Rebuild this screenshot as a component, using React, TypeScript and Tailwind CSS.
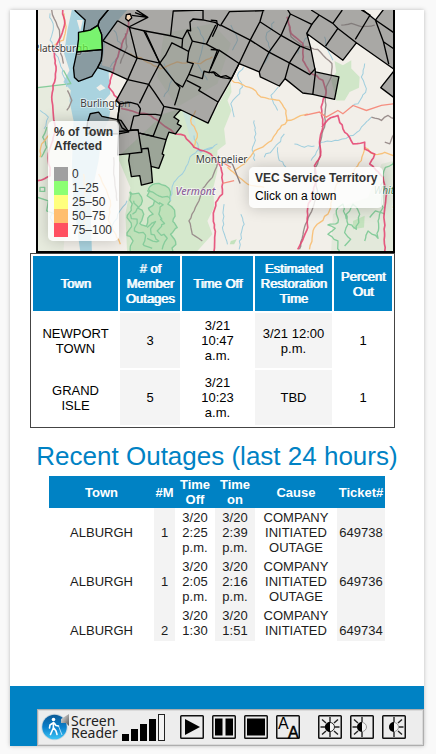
import React from "react";

const LEGEND = [
  { label: "0", swatch: "bg-[#a0a0a0]" },
  { label: "1–25", swatch: "bg-[#8cff72]" },
  { label: "25–50", swatch: "bg-[#ffff7d]" },
  { label: "50–75", swatch: "bg-[#ffbe6e]" },
  { label: "75–100", swatch: "bg-[#ff5060]" },
];

const CURRENT = [
  ["NEWPORT TOWN", "3", "3/21 10:47 a.m.", "3/21 12:00 p.m.", "1"],
  ["GRAND ISLE", "5", "3/21 10:23 a.m.", "TBD", "1"],
];

const RECENT = [
  ["ALBURGH", "1", "3/20 2:25 p.m.", "3/20 2:39 p.m.", "COMPANY INITIATED OUTAGE", "649738"],
  ["ALBURGH", "1", "3/20 2:05 p.m.", "3/20 2:16 p.m.", "COMPANY INITIATED OUTAGE", "649736"],
  ["ALBURGH", "2", "3/20 1:30 p.m.", "3/20 1:51 p.m.", "COMPANY INITIATED OUTAGE", "649734"],
];

// Splits each straight run into short steps with a repeatable sideways drift,
// so rivers, roads and forest edges look natural.
function meander(lines: number[][], amp: number): string {
  let seed = 7;
  const rand = () => {
    seed = (seed * 16807) % 2147483647;
    return seed / 2147483647 - 0.5;
  };
  return lines
    .map((p) => {
      let d = `M${p[0]} ${p[1]}`;
      for (let i = 2; i < p.length; i += 2) {
        const [x0, y0, x1, y1] = [p[i - 2], p[i - 1], p[i], p[i + 1]];
        const steps = Math.max(1, Math.round(Math.hypot(x1 - x0, y1 - y0) / 11));
        for (let s = 1; s <= steps; s++) {
          const t = s / steps;
          const k = s === steps ? 0 : amp;
          d += ` L${(x0 + (x1 - x0) * t + rand() * k).toFixed(1)} ${(y0 + (y1 - y0) * t + rand() * k).toFixed(1)}`;
        }
      }
      return d;
    })
    .join(" ");
}

const FOREST = [
  [298, 573, 325, 577, 336, 600, 322, 622, 340, 640, 328, 668, 348, 676, 352, 652, 368, 640, 354, 622, 372, 600, 350, 585, 358, 558, 385, 548, 405, 555, 420, 580, 412, 610, 432, 628, 428, 655, 440, 680, 420, 700, 435, 722, 428, 755, 300, 755, 308, 720, 290, 704, 303, 672, 290, 650, 302, 620, 298, 573],
];
const FOREST_TRAILS = [
  [300, 640, 320, 655, 312, 690, 345, 702, 338, 730, 365, 742],
  [372, 600, 398, 612, 385, 640, 402, 668, 380, 690, 410, 712, 395, 745],
  [350, 570, 385, 585, 415, 590],
  [350, 680, 375, 662, 362, 700, 385, 720, 350, 712],
  [310, 600, 325, 620, 306, 640],
];
const PRESERVES = [
  [925, 750, 920, 720, 890, 700, 912, 682, 890, 672, 920, 665, 915, 630, 935, 610, 945, 655],
  [940, 735, 958, 715, 940, 695, 950, 670, 945, 640, 965, 610, 985, 640, 975, 685, 950, 670],
  [1000, 720, 1010, 690, 1040, 712, 1040, 660, 1055, 620, 1050, 560, 1062, 500, 1089, 480],
  [1015, 650, 1032, 630, 1060, 640],
  [50, 380, 38, 410, 50, 440, 34, 470],
];
const RIVERS = [
  [60, 40, 70, 80, 60, 120, 90, 190, 110, 260],
  [30, 330, 55, 350, 42, 385],
  [80, 620, 60, 650, 80, 700],
  [290, 600, 262, 640, 240, 700],
  [545, 440, 500, 450, 475, 480, 455, 520, 430, 545, 420, 600],
  [490, 405, 510, 455, 560, 430],
  [638, 200, 620, 225, 635, 260, 600, 310, 610, 350],
  [742, 260, 720, 285, 740, 330],
  [760, 400, 740, 430, 700, 470],
  [670, 360, 675, 400, 665, 440, 672, 480],
  [740, 440, 745, 480, 765, 500],
  [580, 610, 575, 680, 590, 730],
  [630, 640, 640, 670, 630, 700, 625, 745],
  [1000, 190, 990, 230, 1005, 265, 980, 310, 960, 320],
  [790, 430, 820, 440, 850, 436],
  [840, 480, 870, 425, 920, 420, 965, 405, 990, 380, 1020, 350],
  [730, 65, 705, 110, 720, 150, 700, 190],
  [600, 75, 620, 120, 605, 150],
  [800, 160, 830, 110],
  [250, 90, 275, 150, 240, 200],
  [500, 80, 520, 120, 500, 190, 530, 240],
  [400, 190, 425, 240, 400, 290],
  [880, 110, 890, 150, 905, 180],
];
const ROADS = [
  [603, 240, 665, 265, 690, 290, 745, 300, 765, 330, 768, 362, 740, 390, 722, 420, 695, 440, 670, 450, 640, 490, 610, 510],
  [765, 360, 790, 355, 830, 340],
  [24, 150, 60, 140, 100, 120, 108, 80, 102, 40],
  [60, 400, 35, 430, 30, 470],
  [300, 160, 340, 180, 390, 205, 440, 185, 510, 190, 545, 170],
  [1000, 440, 990, 480, 960, 520, 920, 545, 890, 640, 850, 680, 835, 745],
  [1000, 440, 1030, 462, 1060, 455, 1085, 465],
  [590, 500, 650, 550, 700, 560],
  [205, 520, 240, 600, 235, 660, 270, 730],
  [490, 440, 500, 400, 480, 360, 495, 330],
  [160, 520, 165, 700],
];
const RAILS = [
  [65, 30, 72, 55, 88, 90, 88, 140, 100, 190],
  [770, 60, 780, 110, 815, 138, 860, 148, 885, 175, 902, 190, 900, 230, 885, 260, 880, 380, 865, 430, 868, 465, 850, 510, 860, 580, 820, 680, 805, 745],
  [560, 490, 545, 530, 515, 565, 505, 600, 475, 660, 485, 700, 515, 720],
  [1088, 400, 1075, 430, 1060, 425],
  [285, 100, 290, 140, 270, 190],
  [1020, 350, 1050, 360, 1070, 345, 1089, 355],
  [930, 75, 960, 70, 990, 80, 1030, 75],
  [112, 270, 125, 300, 110, 330],
  [250, 470, 250, 520, 260, 600],
];
const HIGHWAYS = [
  [98, 30, 104, 70, 92, 110, 70, 150, 78, 210, 65, 290, 75, 390, 55, 460, 60, 525, 24, 540],
  [298, 40, 292, 90, 265, 160, 250, 210, 235, 260, 265, 300, 275, 325, 360, 345, 430, 398, 462, 405, 490, 440, 540, 460, 565, 490, 575, 520, 575, 580, 555, 605, 548, 650, 553, 700, 550, 750],
  [768, 50, 780, 100, 815, 130, 815, 180, 835, 215, 875, 240, 885, 275, 870, 320, 875, 380, 865, 425, 868, 465, 850, 495, 855, 540, 830, 620, 830, 680, 800, 745],
  [872, 380, 890, 358, 920, 345, 935, 385, 965, 430, 1000, 425, 1000, 445, 1030, 460, 1015, 490, 1055, 530, 1065, 580, 1058, 640, 1060, 750],
];

// Town boundaries inside the service territory
const TOWN_LINES = [
  "M262 62 L218 122 L320 174 L388 189 L340 92 L297 82 L262 62",
  "M297 82 L320 174 L292 238 L355 252 L388 189 L345 95",
  "M297 80 L352 52 L314 38 M318 30 L352 52 L304 46",
  "M340 92 L420 107 L456 116 L470 90 L480 92 L478 66 L487 57 L520 60 L555 68 L570 78",
  "M420 107 L428 33 L517 30 V58",
  "M388 189 L405 165 L424 128 L454 143 L456 116 M454 143 L474 154 L485 123 L470 90",
  "M485 123 L527 132 L555 75 M527 132 L560 150 L535 217 L520 213 L515 235 L475 222 L488 190 L470 185 L474 154",
  "M388 189 L434 247 L456 260 L475 222 M434 247 L448 262 L440 290 L432 315",
  "M355 252 L372 276 L400 318 L450 328 M355 252 L327 309",
  "M535 217 L548 215 L555 225 L575 232 L600 236 M468 240 L510 262 L504 270 L562 305",
  "M258 300 L268 310 L300 306 L322 312 L330 325 L326 345 L310 347 L300 388 L325 388 M268 310 L262 355 L275 382 L295 394",
  "M326 342 L375 342 L392 345 L400 318 M392 345 L368 407 L327 398",
  "M540 60 L558 62 L560 78 M570 75 L596 35 L700 32 M570 75 L658 120 L687 65 L697 30",
  "M540 148 L565 150 L625 190 L658 120 L714 156 L750 106 L687 65",
  "M540 217 L552 216 L570 230 L585 226 L602 235 L625 190 M560 78 L545 110 M565 150 L540 205",
  "M714 156 L685 215 M714 156 L775 188 L807 138 L838 150 M750 106 L807 138 M750 106 L778 42 L770 30 M778 42 L842 73 L827 100",
  "M775 188 L762 235 M775 188 L836 223 L853 205 M853 215 L845 282",
  "M842 73 L864 45 L840 30 M864 45 L905 70 L920 85 L883 138 M905 70 L933 30 M920 85 L975 128 M972 118 L1016 45 L990 30",
  "M1032 60 L1056 125 L1072 192 M1032 60 L1090 100 M1056 125 L1090 148",
];

const LAND =
  "M232 20 L235 28 L207 62 L203 76 L214 103 L216 148 L213 180 L202 202 L240 214 L292 238 L258 300 L268 310 L262 355 L265 393 L262 463 L298 459 L295 480 L303 528 L328 525 L333 553 L366 545 L362 497 L385 503 L400 463 L395 460 L407 417 L415 395 L435 400 L452 377 L440 370 L445 360 L430 350 L450 328 L532 368 L562 305 L602 235 L625 190 L685 215 L688 230 L745 257 L762 235 L815 278 L845 282 L910 297 L923 230 L853 215 L838 140 L827 100 L935 180 L975 128 L1088 207 L1100 200 V20 H1055 V30 L1032 60 L995 30 V20 H232 Z";

function TerritoryMap() {
  return (
    <svg
      className="absolute inset-0 h-full w-full"
      viewBox="24 30 1065 720"
      preserveAspectRatio="xMinYMin slice"
      role="img"
      aria-label="Map of the service territory"
    >
      <rect x="0" y="0" width="1400" height="800" fill="#f2efe9" />
      <path d="M24 258 L125 250 L130 390 L100 750 H24 Z" fill="#e7ebde" />
      <path
        d="M450 325 L532 368 L600 245 L602 275 L590 300 L602 330 L580 385 L585 430 L560 450 L560 510 L548 560 L550 620 L530 660 L545 700 L500 750 H290 L285 640 L300 560 L262 470 L400 340 Z"
        fill="#d5e8cc"
      />
      <path d="M400 100 L545 70 L600 130 L560 250 L440 320 L380 230 Z" fill="#e4ebda" />
      <path d="M910 182 L935 195 L960 180 L960 205 L985 230 L983 262 L955 275 L940 300 L915 300 L900 240 L915 215 Z" fill="#d0e6c8" />
      <path d="M905 640 L950 610 L1010 590 L1050 490 L1089 480 V750 H900 Z" fill="#e3e9db" />
      <path d="M965 660 L1000 645 L998 680 L965 685 Z M600 720 L618 715 L610 730 L597 730 Z" fill="#c3e2bd" />
      {/* Lake Champlain */}
      <path
        d="M125 30 L112 90 L102 160 L118 210 L100 245 L122 270 L118 300 L130 360 L125 500 L130 600 L150 750 L185 750 L180 600 L205 480 L215 400 L235 360 L240 330 L222 300 L240 280 L235 220 L250 205 L215 195 L225 120 L262 62 L290 30 Z"
        fill="#aad3df"
      />
      <path d="M198 262 L212 252 L226 264 L208 272 Z M140 60 L150 95 L158 60 Z" fill="#f2efe9" />
      <path d="M455 330 L490 345 L500 400 L482 430 L470 380 Z" fill="#cbe3da" />
      <path d={meander(FOREST, 12)} fill="#b9dfb4" fillOpacity="0.8" stroke="#86cc9b" strokeWidth="4" strokeLinejoin="round" />
      <g fill="none" stroke="#86cc9b" strokeWidth="4" strokeLinejoin="round">
        <path d={meander(FOREST_TRAILS, 14)} />
        <path d={meander(PRESERVES, 8)} />
        <path d="M24 262 L122 250 L100 210 M24 590 L55 600 L50 630 L75 640 M30 560 H44 V572 H30 Z" />
      </g>
      <path d={meander(RIVERS, 7)} fill="none" stroke="#9fcede" strokeWidth="3" strokeLinejoin="round" />
      <path d={meander(ROADS, 5)} fill="none" stroke="#f8c27c" strokeWidth="4" strokeLinejoin="round" />
      <path d={meander(RAILS, 3)} fill="none" stroke="#9b8f8d" strokeWidth="4" strokeLinejoin="round" />
      <path d={meander(HIGHWAYS, 4)} fill="none" stroke="#e5406e" strokeWidth="5" strokeLinejoin="round" strokeOpacity="0.85" />
      <path
        d="M820 345 L865 335 L885 350 L920 330 L935 340 L965 315 L1005 330 L1050 315 L1090 310 M575 548 L610 540 M575 485 L600 500"
        fill="none"
        stroke="#f58f80"
        strokeWidth="4"
      />
      <path d="M575 482 L605 490 L628 548" fill="none" stroke="#8a7f80" strokeWidth="4" />
      <g fontFamily="'Noto Sans', sans-serif" fontSize="30" stroke="#ffffff" strokeOpacity="0.65" strokeWidth="5" paintOrder="stroke" fill="#3d3d3d">
        <text x="10" y="155">Plattsburgh</text>
        <text x="150" y="320">Burlington</text>
        <text x="495" y="486">Montpelier</text>
        <text x="435" y="584" fontStyle="italic" fontWeight="500" fontSize="31" fill="#8d629b">Vermont</text>
        <text x="1027" y="580" fontStyle="italic" fill="#3f8a57">White</text>
        <text x="1083" y="621" fontStyle="italic" fill="#3f8a57">M</text>
      </g>
      {/* Member towns */}
      <g stroke="#000000" strokeWidth="4" strokeLinejoin="round">
        <path d={LAND} fill="#6e6e6e" fillOpacity="0.55" />
        <path d="M132 20 L135 32 L165 60 L160 95 L180 90 L203 76 L207 62 L235 28 Z" fill="#6e6e6e" fillOpacity="0.55" />
        <path d="M140 155 L216 148 L213 180 L202 202 L185 228 L145 243 L133 232 L130 203 Z" fill="#6e6e6e" fillOpacity="0.55" />
        <path d="M168 400 L172 365 L180 340 L205 335 L215 348 L272 360 L295 394 L265 400 Z" fill="#6e6e6e" fillOpacity="0.55" />
        <path d="M1100 196 L1048 262 L1100 301 Z" fill="#6e6e6e" fillOpacity="0.55" />
        <path d="M145 97 L180 90 L203 76 L214 103 L216 148 L140 155 L145 118 Z" fill="#66ff44" fillOpacity="0.72" />
        <path
          d="M265 393 L323 388 L334 455 L334 445 L353 443 L362 497 M298 459 L334 455 M327 398 L407 417"
          fill="none"
        />
        {TOWN_LINES.map((d) => (
          <path key={d} d={d} fill="none" />
        ))}
        <path d="M288 44 L300 42 L304 54 L294 63 L286 56 Z" fill="#f8d9b8" />
      </g>
    </svg>
  );
}

const heading = "bg-[#0082c4] px-[5px] py-[5px] font-normal text-white [text-shadow:1px_0_0_#fff]";

function CurrentOutages() {
  return (
    <table className="w-full table-fixed border-separate border-spacing-[2px] border border-[#444] text-center text-[13px] leading-[15px] text-black">
      <colgroup>
        <col className="w-[85px]" />
        <col className="w-[60px]" />
        <col className="w-[71px]" />
        <col className="w-[77px]" />
        <col className="w-[58px]" />
      </colgroup>
      <thead>
        <tr>
          {["Town", "# of Member Outages", "Time Off", "Estimated Restoration Time", "Percent Out"].map((h) => (
            <th key={h} scope="col" className={heading}>
              {h}
            </th>
          ))}
        </tr>
      </thead>
      <tbody>
        {CURRENT.map((row) => (
          <tr key={row[0]}>
            {row.map((cell, i) => (
              <td key={i} className="p-[5px] align-middle even:bg-[#f4f4f4]">
                {cell}
              </td>
            ))}
          </tr>
        ))}
      </tbody>
    </table>
  );
}

function RecentOutages() {
  return (
    <div className="mx-[39px] h-[165px] overflow-hidden">
      <table className="w-full table-fixed border-collapse text-center text-[13px] leading-[15px] text-[#1c1c1c]">
        <colgroup>
          <col className="w-[105px]" />
          <col className="w-[21px]" />
          <col className="w-[40px]" />
          <col className="w-[40px]" />
          <col className="w-[82px]" />
          <col className="w-[48px]" />
        </colgroup>
        <thead>
          <tr className="bg-[#0082c4] text-white">
            {["Town", "#M", "Time Off", "Time on", "Cause", "Ticket#"].map((h) => (
              <th key={h} scope="col" className="p-px font-bold">
                {h}
              </th>
            ))}
          </tr>
        </thead>
        <tbody>
          {RECENT.map((row) => (
            <tr key={row[5]}>
              {row.map((cell, i) => (
                <td key={i} className="px-px py-[2px] align-middle even:bg-[#f3f3f3]">
                  {cell}
                </td>
              ))}
            </tr>
          ))}
        </tbody>
      </table>
    </div>
  );
}

function ToolButton({ label, children }: { label: string; children: React.ReactNode }) {
  return (
    <button type="button" aria-label={label} className="h-6 w-6 shrink-0">
      <svg viewBox="0 0 24 24" className="h-6 w-6">
        <rect x="0.75" y="0.75" width="22.5" height="22.5" rx="0.8" fill="#ececec" stroke="#111" strokeWidth="1.5" />
        {children}
      </svg>
    </button>
  );
}

const RAYS_LEFT = "M12 2 V7 M12 17 V22 M2.5 12 H7 M4 4.500 L8 8 M4 19.500 L8 16";
const RAYS_RIGHT = "M12 2 V7 M12 17 V22 M17 12 H21.500 M20 4.500 L16 8 M20 19.500 L16 16";

function HalfSun({ rays, faint }: { rays: string; faint: boolean }) {
  return (
    <g>
      <path d={rays} stroke="#222" strokeWidth="1.400" fill="none" />
      <circle cx="12" cy="12" r="4.500" fill="#f4f4f4" stroke={faint ? "#999" : "#222"} strokeWidth="1" />
      <path d="M12 7 A5 5 0 0 0 12 17 Z" fill="#000" />
    </g>
  );
}

function ReaderLogo() {
  return (
    <svg viewBox="0 0 30 30" className="h-[30px] w-[30px] shrink-0" aria-hidden="true">
      <defs>
        <linearGradient id="globe" x1="0" y1="0" x2="0" y2="1">
          <stop offset="0" stopColor="#0b5a96" />
          <stop offset="0.5" stopColor="#0a7fcb" />
          <stop offset="1" stopColor="#3cc4f5" />
        </linearGradient>
        <linearGradient id="horn" x1="0" y1="0" x2="1" y2="1">
          <stop offset="0" stopColor="#eeeeee" />
          <stop offset="1" stopColor="#555555" />
        </linearGradient>
      </defs>
      <circle cx="13.500" cy="15" r="13.200" fill="#c9d6de" />
      <circle cx="13.500" cy="15" r="12.300" fill="url(#globe)" />
      <path d="M20 7 L28 2 V14 L25 11 L20 11 Z" fill="url(#horn)" />
      <circle cx="12.500" cy="7.500" r="1.800" fill="#fff" />
      <path
        d="M12.500 10.500 L12.300 16 L9.500 22.500 M12.800 16 L15 19 L16 22.500 M12 11 L9 13 L8.500 16 M13.200 11 L15 13.500 L17.500 14"
        stroke="#fff"
        strokeWidth="1.600"
        strokeLinecap="round"
        strokeLinejoin="round"
        fill="none"
      />
      <path d="M17.500 14 L21 23" stroke="#d8efff" strokeWidth="0.800" />
    </svg>
  );
}

function ReaderBar() {
  return (
    <div
      role="toolbar"
      aria-label="Screen Reader"
      className="ml-[27px] flex h-[37px] items-center border border-[#aeaeae] bg-[#ededed] pb-px pl-[3px] shadow-[inset_0_0_0_1px_#dadada]"
    >
      <ReaderLogo />
      <span className="w-12 font-['Noto_Sans',sans-serif] text-[14px] leading-3 text-[#222]">
        Screen
        <br />
        Reader
      </span>
      <button type="button" aria-label="Volume" className="ml-[3px] flex h-[27px] shrink-0 items-end gap-[2px]">
        <span className="h-[7px] w-[7px] bg-black" />
        <span className="h-3 w-[7px] bg-black" />
        <span className="h-[17px] w-[7px] bg-black" />
        <span className="h-[22px] w-[7px] bg-black" />
        <span className="h-[27px] w-[7px] border border-[#222] bg-[#f3f3f3]" />
      </button>
      <div className="ml-[15px] flex gap-2">
        <ToolButton label="Play">
          <path d="M5 4 L20 12 L5 20 Z" fill="#000" />
        </ToolButton>
        <ToolButton label="Pause">
          <path d="M3 3.500 H10.500 V20.500 H3 Z M13.500 3.500 H21 V20.500 H13.500 Z" fill="#000" />
        </ToolButton>
        <ToolButton label="Stop">
          <path d="M3 3.500 H21 V20.500 H3 Z" fill="#000" />
        </ToolButton>
        <ToolButton label="Text size">
          <g fontFamily="'Liberation Sans', Arial, sans-serif" fill="#000">
            <text x="2" y="14" fontSize="16">A</text>
            <text x="12" y="23" fontSize="16" stroke="#000" strokeWidth="0.500">A</text>
          </g>
        </ToolButton>
      </div>
      <div className="ml-[18px] flex gap-2">
        <ToolButton label="High contrast">
          <HalfSun rays={RAYS_LEFT + RAYS_RIGHT} faint={false} />
        </ToolButton>
        <ToolButton label="Dark contrast">
          <HalfSun rays={RAYS_LEFT} faint={true} />
        </ToolButton>
        <ToolButton label="Light contrast">
          <HalfSun rays={RAYS_RIGHT} faint={true} />
        </ToolButton>
      </div>
    </div>
  );
}

export default function App() {
  return (
    <div className="min-h-screen bg-[#f9f9f9] pt-[10px] pr-3 pb-2 pl-[10px] font-['Liberation_Sans',Arial,sans-serif]">
      <main className="overflow-hidden bg-white shadow-[0_0_4px_rgba(0,0,0,0.25)]">
        <div className="mr-[29px] ml-5">
          <section className="relative ml-[6px] h-[243px] overflow-hidden border-x-2 border-b-2 border-black">
            <TerritoryMap />
            <div className="absolute bottom-[10px] left-[10px] w-[71px] rounded-[5px] bg-white/80 px-[6px] py-1 text-[12px] leading-[14px] text-[#333] shadow-[0_0_15px_rgba(0,0,0,0.2)]">
              <h3 className="mb-[14px] font-bold whitespace-nowrap">
                % of Town
                <br />
                Affected
              </h3>
              <ul>
                {LEGEND.map((item) => (
                  <li key={item.label} className="flex gap-1 whitespace-nowrap">
                    <span className={`h-[14px] w-[14px] shrink-0 ${item.swatch}`} />
                    {item.label}
                  </li>
                ))}
              </ul>
            </div>
            <div className="absolute right-[10px] bottom-[43px] flex w-[134px] flex-col gap-1 rounded-[5px] bg-white/80 px-[6px] pt-1 pb-[5px] text-[12px] leading-[14px] whitespace-nowrap text-black shadow-[0_0_15px_rgba(0,0,0,0.2)]">
              <h3 className="font-bold text-[#333]">VEC Service Territory</h3>
              <p>Click on a town</p>
            </div>
          </section>
          <CurrentOutages />
        </div>
        <h2 className="mt-2 text-center text-[26px] leading-10 text-[#0082c4]">Recent Outages (last 24 hours)</h2>
        <RecentOutages />
        <footer className="mt-[45px] bg-[#0082c4] pt-[23px]">
          <ReaderBar />
        </footer>
      </main>
    </div>
  );
}
